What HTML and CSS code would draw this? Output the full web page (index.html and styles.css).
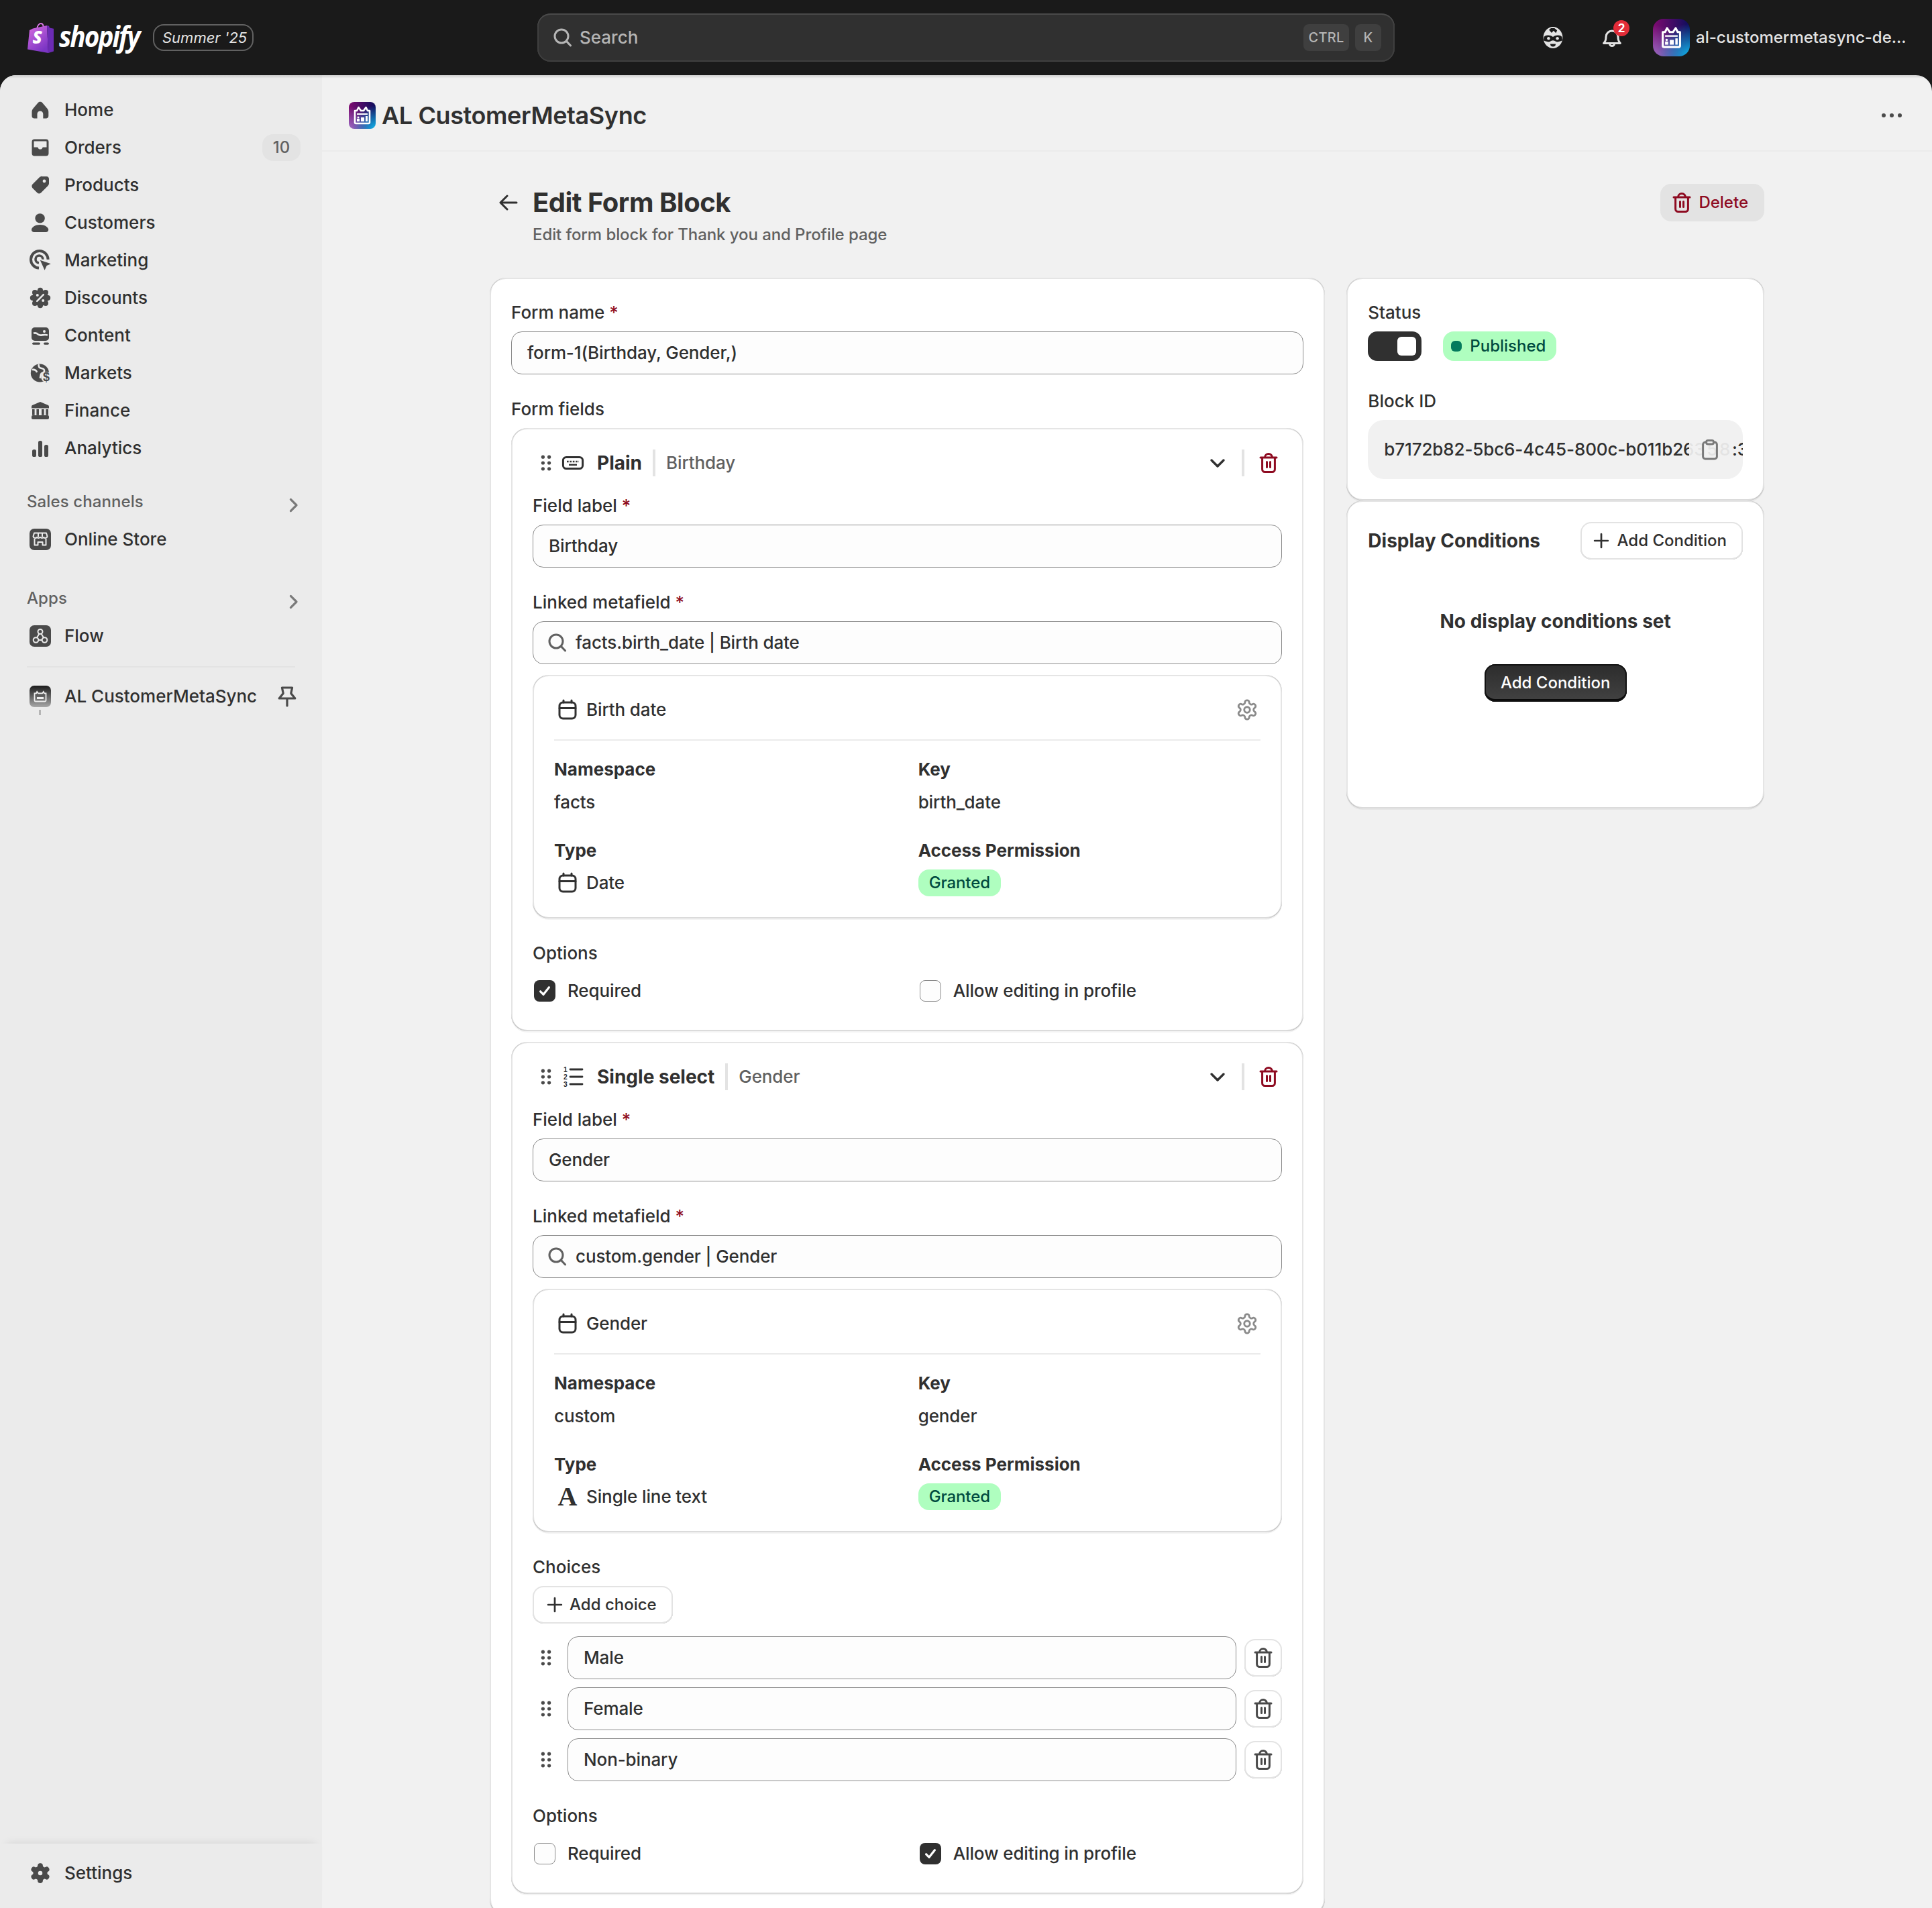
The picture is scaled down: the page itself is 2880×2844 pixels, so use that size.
FILE: index.html
```html
<!DOCTYPE html>
<html lang="en">
<head>
<meta charset="utf-8">
<title>Edit Form Block</title>
<link rel="stylesheet" href="styles.css">
</head>
<body>
<svg class="sprite" xmlns="http://www.w3.org/2000/svg">
  <defs>
    <linearGradient id="bagA" x1="0" y1="0" x2="0.6" y2="1"><stop offset="0" stop-color="#d86ce0"/><stop offset="1" stop-color="#7b35c4"/></linearGradient>
    <linearGradient id="grayApp" x1="0" y1="0" x2="0" y2="1"><stop offset="0" stop-color="#1c1c1c"/><stop offset="1" stop-color="#a8a8a8"/></linearGradient>
  </defs>
  <symbol id="i-home" viewBox="0 0 20 20"><path fill="currentColor" d="M10 3.750c-.7 0-1.300.4-1.800 1l-3.300 3.900c-.7.8-1.150 1.700-1.150 2.700v3.200c0 .9.700 1.700 1.600 1.700h2.400v-3.300a2.200 2.200 0 0 1 4.400 0v3.300h2.400c.9 0 1.600-.8 1.600-1.700v-3.200c0-1-.450-1.900-1.150-2.700l-3.300-3.900c-.5-.6-1.100-1-1.800-1z"/></symbol>
  <symbol id="i-orders" viewBox="0 0 20 20"><path fill="currentColor" fill-rule="evenodd" d="M5.750 3.750h8.500a2 2 0 0 1 2 2v8.500a2 2 0 0 1-2 2h-8.500a2 2 0 0 1-2-2v-8.500a2 2 0 0 1 2-2zM5.600 5.250c-.3 0-.35.2-.35.4v4.100h2.400c.5 0 .8.3.9.7.2.5.7.8 1.450.8s1.250-.3 1.450-.8c.1-.4.4-.7.9-.7h2.400v-4.100c0-.2-.05-.4-.35-.4z"/></symbol>
  <symbol id="i-tag" viewBox="0 0 20 20"><path fill="currentColor" fill-rule="evenodd" d="M11.500 3.500h3.200c1 0 1.800.8 1.800 1.800v3.200c0 .8-.3 1.500-.9 2.100l-5 5c-.8.8-2.100.8-2.900 0l-3.400-3.400c-.8-.8-.8-2.100 0-2.900l5-5c.6-.6 1.300-.9 2.200-.9zM13 5.800a1.200 1.200 0 1 0 0 2.400 1.200 1.200 0 0 0 0-2.400z"/></symbol>
  <symbol id="i-person" viewBox="0 0 20 20"><circle cx="9.800" cy="6.700" r="3.600" fill="currentColor"/><path fill="currentColor" d="M9.800 11.500c3.500 0 6.300 1.800 6.300 3.800 0 1-.8 1.700-1.800 1.700h-9c-1 0-1.800-.7-1.800-1.700 0-2 2.800-3.800 6.300-3.800z"/></symbol>
  <symbol id="i-target" viewBox="0 0 20 20"><g fill="none" stroke="currentColor"><path stroke-width="2" d="M9 15.800a6.400 6.400 0 1 1 6.800-6.400"/><path stroke-width="1.800" d="M9 11.900a2.700 2.700 0 1 1 2.900-2.600"/></g><path fill="currentColor" d="M9.900 9.900l8 2.700-3.100 1.400-1.500 3.400z"/></symbol>
  <symbol id="i-discount" viewBox="0 0 20 20"><g fill="currentColor"><circle cx="10" cy="10" r="6"/><circle cx="10" cy="4.400" r="2"/><circle cx="10" cy="15.600" r="2"/><circle cx="4.400" cy="10" r="2"/><circle cx="15.600" cy="10" r="2"/><circle cx="6" cy="6" r="2"/><circle cx="14" cy="6" r="2"/><circle cx="6" cy="14" r="2"/><circle cx="14" cy="14" r="2"/></g><g fill="#ebebeb"><circle cx="7.900" cy="8" r="1"/><circle cx="12.100" cy="12" r="1"/></g><path stroke="#ebebeb" stroke-width="1.300" stroke-linecap="round" d="M7.600 12.400l4.800-4.800"/></symbol>
  <symbol id="i-content" viewBox="0 0 20 20"><rect x="3.500" y="4" width="13" height="10" rx="2.400" fill="currentColor"/><path fill="none" stroke="#ebebeb" stroke-width="1.300" d="M5 8.400c1.700-.7 2.700 0 3.700 1 1.400 1.300 4-.7 6.800.4"/><circle cx="13" cy="7" r="1" fill="#ebebeb"/><rect x="4" y="15.200" width="6" height="1.700" rx=".85" fill="currentColor"/><rect x="12.500" y="15.200" width="4" height="1.700" rx=".85" fill="currentColor"/></symbol>
  <symbol id="i-finance" viewBox="0 0 20 20"><g fill="currentColor"><path d="M10 3.500l5.900 2.500c.4.200.6.500.6.900v1.300h-13v-1.300c0-.4.2-.7.6-.9z"/><rect x="4" y="9" width="1.800" height="4.400"/><rect x="7.200" y="9" width="1.800" height="4.400"/><rect x="11" y="9" width="1.800" height="4.400"/><rect x="14.200" y="9" width="1.800" height="4.400"/><rect x="3.500" y="13.500" width="13" height="3" rx="1"/></g></symbol>
  <symbol id="i-analytics" viewBox="0 0 20 20"><g fill="currentColor"><rect x="4" y="11" width="3" height="5.500" rx="1.300"/><rect x="8.500" y="4.500" width="3" height="12" rx="1.300"/><rect x="13" y="7.500" width="3" height="9" rx="1.300"/></g></symbol>
  <symbol id="i-chev-r" viewBox="0 0 20 20"><path fill="none" stroke="currentColor" stroke-width="1.600" stroke-linecap="round" stroke-linejoin="round" d="M8.200 5.700l4.300 4.300-4.300 4.300"/></symbol>
  <symbol id="i-chev-d" viewBox="0 0 20 20"><path fill="none" stroke="currentColor" stroke-width="1.700" stroke-linecap="round" stroke-linejoin="round" d="M5.500 8l4.500 4.500 4.500-4.500"/></symbol>
  <symbol id="i-store" viewBox="0 0 32 32"><rect width="32" height="32" rx="7" fill="#4a4a4a"/><g fill="none" stroke="#ebebeb" stroke-width="2" stroke-linejoin="round"><path d="M7 6.500h18l1.500 5a3 3 0 0 1-5.300 1.300 4 4 0 0 1-5.200 0 4 4 0 0 1-5.200 0 3 3 0 0 1-5.300-1.300z"/><path d="M7.500 15v9.500h5V20h7v4.500h5V15"/><path d="M13 7v5M19 7v5"/></g></symbol>
  <symbol id="i-flow" viewBox="0 0 32 32"><rect width="32" height="32" rx="7" fill="#4a4a4a"/><g fill="none" stroke="#ebebeb" stroke-width="2"><circle cx="16" cy="9.500" r="3.500"/><circle cx="9.500" cy="22" r="3.800"/><circle cx="22.500" cy="22" r="3.800"/><path d="M14.500 12.500l-3.500 6M17.500 12.500l3.500 6M13.300 22h5.400"/></g></symbol>
  <symbol id="i-appgray" viewBox="0 0 32 32"><rect width="32" height="32" rx="7" fill="url(#grayApp)"/><g fill="none" stroke="#eee" stroke-width="1.800"><path d="M7.500 11.500h2.500l1.200-2.500 1.800 2.500h6l1.800-2.500 1.200 2.500h2.500v10.500a1.500 1.500 0 0 1-1.500 1.500h-14a1.500 1.500 0 0 1-1.500-1.500z"/></g><rect x="11" y="17" width="10" height="3" fill="#eee"/></symbol>
  <symbol id="i-pin" viewBox="0 0 20 20"><path fill="none" stroke="currentColor" stroke-width="1.600" stroke-linejoin="round" stroke-linecap="round" d="M6.200 3.500h7.600l-.9 4.200 3 3.800H4.100l3-3.800zM10 11.500v5.500"/></symbol>
  <symbol id="i-gear" viewBox="0 0 24 24"><path fill="none" stroke="currentColor" stroke-width="2" d="M12.220 2h-.44a2 2 0 0 0-2 2v.18a2 2 0 0 1-1 1.730l-.43.25a2 2 0 0 1-2 0l-.15-.08a2 2 0 0 0-2.730.73l-.22.38a2 2 0 0 0 .73 2.730l.15.1a2 2 0 0 1 1 1.720v.51a2 2 0 0 1-1 1.740l-.15.09a2 2 0 0 0-.73 2.730l.22.38a2 2 0 0 0 2.730.73l.15-.08a2 2 0 0 1 2 0l.43.25a2 2 0 0 1 1 1.730V20a2 2 0 0 0 2 2h.44a2 2 0 0 0 2-2v-.18a2 2 0 0 1 1-1.730l.43-.25a2 2 0 0 1 2 0l.15.08a2 2 0 0 0 2.730-.73l.22-.39a2 2 0 0 0-.73-2.730l-.15-.08a2 2 0 0 1-1-1.740v-.5a2 2 0 0 1 1-1.740l.15-.09a2 2 0 0 0 .73-2.730l-.22-.38a2 2 0 0 0-2.730-.73l-.15.08a2 2 0 0 1-2 0l-.43-.25a2 2 0 0 1-1-1.730V4a2 2 0 0 0-2-2z"/><circle cx="12" cy="12" r="3" fill="none" stroke="currentColor" stroke-width="2"/></symbol>
  <symbol id="i-gear-solid" viewBox="0 0 24 24"><path fill="currentColor" stroke="currentColor" stroke-width="1" d="M12.220 2h-.44a2 2 0 0 0-2 2v.18a2 2 0 0 1-1 1.730l-.43.25a2 2 0 0 1-2 0l-.15-.08a2 2 0 0 0-2.730.73l-.22.38a2 2 0 0 0 .73 2.730l.15.1a2 2 0 0 1 1 1.720v.51a2 2 0 0 1-1 1.740l-.15.09a2 2 0 0 0-.73 2.730l.22.38a2 2 0 0 0 2.730.73l.15-.08a2 2 0 0 1 2 0l.43.25a2 2 0 0 1 1 1.730V20a2 2 0 0 0 2 2h.44a2 2 0 0 0 2-2v-.18a2 2 0 0 1 1-1.730l.43-.25a2 2 0 0 1 2 0l.15.08a2 2 0 0 0 2.730-.73l.22-.39a2 2 0 0 0-.73-2.730l-.15-.08a2 2 0 0 1-1-1.740v-.5a2 2 0 0 1 1-1.740l.15-.09a2 2 0 0 0 .73-2.730l-.22-.38a2 2 0 0 0-2.730-.73l-.15.08a2 2 0 0 1-2 0l-.43-.25a2 2 0 0 1-1-1.730V4a2 2 0 0 0-2-2z"/><circle cx="12" cy="12" r="2.300" fill="#ebebeb"/></symbol>
  <symbol id="i-search" viewBox="0 0 20 20"><g fill="none" stroke="currentColor" stroke-width="1.500" stroke-linecap="round"><circle cx="9" cy="9" r="5"/><path d="M12.800 12.800l3 3.200"/></g></symbol>
  <symbol id="i-clip" viewBox="0 0 20 20"><g fill="none" stroke="currentColor" stroke-width="1.500"><rect x="4.800" y="4.500" width="10.400" height="12.500" rx="1.800"/><rect x="7.300" y="3.200" width="5.400" height="2.800" rx="1.200" fill="#f1f1f1"/></g></symbol>
  <symbol id="i-trash" viewBox="0 0 20 20"><g fill="none" stroke="currentColor" stroke-width="1.500" stroke-linecap="round" stroke-linejoin="round"><path d="M4 6h12M7.250 6a2.750 2.750 0 0 1 5.500 0M5.300 6v8.800a2 2 0 0 0 2 2h5.400a2 2 0 0 0 2-2V6M8.750 9.300v4M11.250 9.300v4"/></g></symbol>
  <symbol id="i-plus" viewBox="0 0 20 20"><path fill="none" stroke="currentColor" stroke-width="1.500" stroke-linecap="round" d="M10 4.500v11M4.500 10h11"/></symbol>
  <symbol id="i-check" viewBox="0 0 20 20"><path fill="none" stroke="#fff" stroke-width="2" stroke-linecap="round" stroke-linejoin="round" d="M6 10.500l2.800 2.800 5.200-6.600"/></symbol>
  <symbol id="i-cal" viewBox="0 0 20 20"><g fill="none" stroke="currentColor" stroke-width="1.500" stroke-linecap="round"><rect x="4" y="4.500" width="12" height="12" rx="2.600"/><path d="M4 8.800h12M7 3v1.500M13 3v1.500"/></g></symbol>
  <symbol id="i-key" viewBox="0 0 20 20"><g fill="none" stroke="currentColor" stroke-width="1.500"><rect x="2.700" y="5.700" width="14.600" height="8.600" rx="2.400"/></g><path stroke="currentColor" stroke-width="1.200" stroke-dasharray="1.300 .9" d="M5.500 9h9"/><path stroke="currentColor" stroke-width="1.200" d="M7 11.400h6"/></symbol>
  <symbol id="i-drag" viewBox="0 0 20 20"><g fill="currentColor"><circle cx="7.700" cy="5.600" r="1.300"/><circle cx="12.300" cy="5.600" r="1.300"/><circle cx="7.700" cy="10" r="1.300"/><circle cx="12.300" cy="10" r="1.300"/><circle cx="7.700" cy="14.400" r="1.300"/><circle cx="12.300" cy="14.400" r="1.300"/></g></symbol>
  <symbol id="i-back" viewBox="0 0 20 20"><path fill="none" stroke="currentColor" stroke-width="1.500" stroke-linecap="round" stroke-linejoin="round" d="M16 10H4.200M9 5l-5 5 5 5"/></symbol>
  <symbol id="i-dots" viewBox="0 0 20 20"><g fill="currentColor"><circle cx="4" cy="10" r="1.500"/><circle cx="10" cy="10" r="1.500"/><circle cx="16" cy="10" r="1.500"/></g></symbol>
  <symbol id="i-bell" viewBox="0 0 20 20"><path fill="none" stroke="currentColor" stroke-width="1.500" stroke-linejoin="round" stroke-linecap="round" d="M3.800 14.200c1.300-1.100 1.700-2.300 1.700-4.700a4.500 4.500 0 0 1 9 0c0 2.400.4 3.600 1.700 4.700zM8.300 14.600a1.700 1.700 0 0 0 3.400 0"/></symbol>
  <symbol id="i-mask" viewBox="0 0 20 20"><ellipse cx="10" cy="10" rx="7.200" ry="8" fill="currentColor"/><path fill="#1a1a1a" d="M3.300 9.500c1.500-1.500 4-1.700 6.700 0 2.700-1.700 5.200-1.500 6.700 0l.3 2.600c-2 .9-3.800 1.400-4.800.9-.9-.5-1.300-.9-2.200-.9s-1.300.4-2.200.9c-1 .5-2.800 0-4.800-.9zM7 4.300l2 2.200 1.400-1.600 1.800 1.700.9-2-2-1.600H8.500z"/><circle cx="6.700" cy="10.600" r="1.100" fill="currentColor"/><circle cx="13.300" cy="10.600" r="1.100" fill="currentColor"/><path fill="#1a1a1a" d="M8 14.700h4a2 2 0 0 1-4 0z"/></symbol>
  <symbol id="i-app" viewBox="0 0 40 40"><g fill="none" stroke="#fff" stroke-width="2.600" stroke-linejoin="round"><path d="M9 13h3l2.500-5 3.500 5h4l3.500-5 2.500 5h3v17.500a1.500 1.500 0 0 1-1.500 1.500h-19A1.500 1.500 0 0 1 9 30.500z"/><path stroke-width="2" d="M12 18h16"/></g><g fill="#fff"><circle cx="14" cy="23" r="1.500"/><rect x="12" y="25" width="4" height="4"/><rect x="18" y="23" width="5" height="6"/><rect x="25" y="21" width="3" height="8"/></g></symbol>
</svg>

<header class="topbar">
  <div class="brand">
    <svg class="bag" viewBox="0 0 40 46"><path fill="none" stroke="#d978e6" stroke-width="2" d="M14 11c.6-5 3-9 6-9 2.800 0 4 3.600 4 8"/><path fill="url(#bagA)" d="M8 9.500L29 5l2 41L0 40.500 3 12z"/><path fill="#6b2bb3" d="M29 5l3 .8 1 2.600 6 1.400L39 43.500 31 46z"/><text x="14.500" y="32" text-anchor="middle" class="svg-s">S</text></svg>
    <span class="wordmark">shopify</span>
    <span class="edition">Summer '25</span>
  </div>
  <div class="searchbar">
    <svg class="search-ic"><use href="#i-search"/></svg>
    <span class="search-text">Search</span>
    <span class="kbd">CTRL</span>
    <span class="kbd">K</span>
  </div>
  <div class="top-actions">
    <svg class="ic top-ic"><use href="#i-mask"/></svg>
    <span class="bell-wrap">
      <svg class="ic top-ic"><use href="#i-bell"/></svg>
      <span class="bell-badge">2</span>
    </span>
    <span class="store-ava"><svg class="ic-app"><use href="#i-app"/></svg></span>
    <span class="store-name">al-customermetasync-de...</span>
  </div>
</header>

<div class="frame">
  <aside class="sidebar">
    <nav class="nav">
      <a class="nav-row"><svg class="ic"><use href="#i-home"/></svg><span>Home</span></a>
      <a class="nav-row"><svg class="ic"><use href="#i-orders"/></svg><span>Orders</span><span class="count">10</span></a>
      <a class="nav-row"><svg class="ic"><use href="#i-tag"/></svg><span>Products</span></a>
      <a class="nav-row"><svg class="ic"><use href="#i-person"/></svg><span>Customers</span></a>
      <a class="nav-row"><svg class="ic"><use href="#i-target"/></svg><span>Marketing</span></a>
      <a class="nav-row"><svg class="ic"><use href="#i-discount"/></svg><span>Discounts</span></a>
      <a class="nav-row"><svg class="ic"><use href="#i-content"/></svg><span>Content</span></a>
      <a class="nav-row"><svg class="ic" viewBox="0 0 20 20"><circle cx="9.700" cy="10" r="6.800" fill="#4a4a4a"/><path fill="none" stroke="#ebebeb" stroke-width="1.300" d="M9 3.500c-.7 1.700.4 2.800 2 3 1.400.2 2.300 1 2 2.200-.2 1-1.400 1-2.200 1.700-.8.800-.2 2.600-1.200 3.300M4 7.500c1.600-.2 3 .5 3.600 2"/><circle cx="14.500" cy="13" r="3.900" fill="#ebebeb"/><text x="14.500" y="16.100" text-anchor="middle" class="svg-dollar">$</text></svg><span>Markets</span></a>
      <a class="nav-row"><svg class="ic"><use href="#i-finance"/></svg><span>Finance</span></a>
      <a class="nav-row"><svg class="ic"><use href="#i-analytics"/></svg><span>Analytics</span></a>
      <div class="nav-head nav-head-sales"><span>Sales channels</span><svg class="ic nav-chev"><use href="#i-chev-r"/></svg></div>
      <a class="nav-row"><svg class="ic-sq"><use href="#i-store"/></svg><span>Online Store</span></a>
      <div class="nav-head nav-head-apps"><span>Apps</span><svg class="ic nav-chev"><use href="#i-chev-r"/></svg></div>
      <a class="nav-row"><svg class="ic-sq"><use href="#i-flow"/></svg><span>Flow</span></a>
      <hr class="nav-rule">
      <a class="nav-row nav-app"><svg class="ic-sq"><use href="#i-appgray"/></svg><span>AL CustomerMetaSync</span><svg class="ic nav-pin"><use href="#i-pin"/></svg><i class="app-tick"></i></a>
    </nav>
    <div class="nav-foot">
      <a class="nav-row"><svg class="ic ic-settings"><use href="#i-gear-solid"/></svg><span>Settings</span></a>
    </div>
  </aside>

  <main class="main">
    <div class="titlebar">
      <span class="app-ava"><svg class="ic-app"><use href="#i-app"/></svg></span>
      <span class="app-title">AL CustomerMetaSync</span>
      <svg class="ic title-dots"><use href="#i-dots"/></svg>
    </div>

    <div class="page">
      <div class="page-head">
        <svg class="ic back"><use href="#i-back"/></svg>
        <div class="page-titles">
          <h1>Edit Form Block</h1>
          <p>Edit form block for Thank you and Profile page</p>
        </div>
        <button class="btn-delete"><svg class="ic"><use href="#i-trash"/></svg>Delete</button>
      </div>

      <div class="columns">
        <section class="card main-card">
          <label class="lbl">Form name <em>*</em></label>
          <div class="input">form-1(Birthday, Gender,)</div>
          <label class="lbl lbl-gap">Form fields</label>

          <div class="field-card">
            <div class="field-head">
              <svg class="ic"><use href="#i-drag"/></svg>
              <svg class="ic dark"><use href="#i-key"/></svg>
              <strong>Plain</strong>
              <i class="vr"></i>
              <span class="muted">Birthday</span>
              <svg class="ic chev"><use href="#i-chev-d"/></svg>
              <i class="vr"></i>
              <svg class="ic red"><use href="#i-trash"/></svg>
            </div>
            <label class="lbl lbl-first">Field label <em>*</em></label>
            <div class="input">Birthday</div>
            <label class="lbl lbl-gap">Linked metafield <em>*</em></label>
            <div class="input input-search"><svg class="ic gray"><use href="#i-search"/></svg>facts.birth_date | Birth date</div>
            <div class="meta-card">
              <div class="meta-head">
                <svg class="ic dark"><use href="#i-cal"/></svg>
                <span>Birth date</span>
                <svg class="gear"><use href="#i-gear"/></svg>
              </div>
              <div class="meta-grid">
                <div><b>Namespace</b><span class="val">facts</span></div>
                <div><b>Key</b><span class="val">birth_date</span></div>
                <div><b>Type</b><span class="val val-type"><svg class="ic dark"><use href="#i-cal"/></svg>Date</span></div>
                <div><b>Access Permission</b><span class="val val-type"><span class="badge">Granted</span></span></div>
              </div>
            </div>
            <label class="lbl lbl-gap">Options</label>
            <div class="opts">
              <div class="opt"><span class="cb cb-on"><svg><use href="#i-check"/></svg></span>Required</div>
              <div class="opt"><span class="cb"></span>Allow editing in profile</div>
            </div>
          </div>

          <div class="field-card field-next">
            <div class="field-head">
              <svg class="ic"><use href="#i-drag"/></svg>
              <svg class="ic" viewBox="0 0 20 20"><path fill="none" stroke="#303030" stroke-width="1.400" stroke-linecap="round" d="M8 4.500h9M8 10h9M8 15.500h9"/><g class="svg-num"><text x="3" y="6.500">1</text><text x="3" y="12">2</text><text x="3" y="17.600">3</text></g></svg>
              <strong>Single select</strong>
              <i class="vr"></i>
              <span class="muted">Gender</span>
              <svg class="ic chev"><use href="#i-chev-d"/></svg>
              <i class="vr"></i>
              <svg class="ic red"><use href="#i-trash"/></svg>
            </div>
            <label class="lbl lbl-first">Field label <em>*</em></label>
            <div class="input">Gender</div>
            <label class="lbl lbl-gap">Linked metafield <em>*</em></label>
            <div class="input input-search"><svg class="ic gray"><use href="#i-search"/></svg>custom.gender | Gender</div>
            <div class="meta-card">
              <div class="meta-head">
                <svg class="ic dark"><use href="#i-cal"/></svg>
                <span>Gender</span>
                <svg class="gear"><use href="#i-gear"/></svg>
              </div>
              <div class="meta-grid">
                <div><b>Namespace</b><span class="val">custom</span></div>
                <div><b>Key</b><span class="val">gender</span></div>
                <div><b>Type</b><span class="val val-type"><span class="glyph-a">A</span>Single line text</span></div>
                <div><b>Access Permission</b><span class="val val-type"><span class="badge">Granted</span></span></div>
              </div>
            </div>
            <label class="lbl lbl-gap">Choices</label>
            <button class="btn btn-add"><svg class="ic"><use href="#i-plus"/></svg>Add choice</button>
            <div class="choices">
              <div class="choice"><svg class="ic"><use href="#i-drag"/></svg><div class="input">Male</div><button class="btn-icon"><svg class="ic"><use href="#i-trash"/></svg></button></div>
              <div class="choice"><svg class="ic"><use href="#i-drag"/></svg><div class="input">Female</div><button class="btn-icon"><svg class="ic"><use href="#i-trash"/></svg></button></div>
              <div class="choice"><svg class="ic"><use href="#i-drag"/></svg><div class="input">Non-binary</div><button class="btn-icon"><svg class="ic"><use href="#i-trash"/></svg></button></div>
            </div>
            <label class="lbl lbl-gap">Options</label>
            <div class="opts">
              <div class="opt"><span class="cb"></span>Required</div>
              <div class="opt"><span class="cb cb-on"><svg><use href="#i-check"/></svg></span>Allow editing in profile</div>
            </div>
          </div>
        </section>

        <div class="side-col">
          <section class="card side-card">
            <label class="lbl">Status</label>
            <div class="status-row">
              <span class="toggle"><i></i></span>
              <span class="badge badge-status"><i class="dot"></i>Published</span>
            </div>
            <label class="lbl lbl-block">Block ID</label>
            <div class="idbox">
              <span class="idtext">b7172b82-5bc6-4c45-800c-b011b26<span class="idtail">358</span>:3</span>
              <span class="idcover"><svg class="ic clip"><use href="#i-clip"/></svg></span>
            </div>
          </section>
          <section class="card side-card cond-card">
            <div class="cond-head">
              <strong>Display Conditions</strong>
              <button class="btn btn-cond"><svg class="ic"><use href="#i-plus"/></svg>Add Condition</button>
            </div>
            <div class="cond-empty">
              <strong>No display conditions set</strong>
              <button class="btn-primary">Add Condition</button>
            </div>
          </section>
        </div>
      </div>
    </div>
  </main>
</div>
</body>
</html>
```

FILE: styles.css
```css
* { box-sizing: border-box; }
html, body { margin: 0; height: 2844px; overflow: hidden; }
body {
  background: #1a1a1a;
  color: #303030;
  font-family: Inter, "Noto Sans", "Liberation Sans", sans-serif;
  font-size: 26px;
  line-height: 40px;
  font-weight: 450;
  -webkit-font-smoothing: antialiased;
}
.sprite { position: absolute; width: 0; height: 0; overflow: hidden; }
.svg-dollar { font: 700 9px "Liberation Sans", sans-serif; fill: #4a4a4a; }
.svg-num { font: 700 5.200px "Liberation Sans", sans-serif; fill: #303030; }
.svg-s { font: italic 800 26px "Open Sans", sans-serif; fill: #fff; }
.ic { width: 40px; height: 40px; flex: none; display: block; color: #4a4a4a; }
.ic.dark { color: #303030; }
.ic-sq { width: 32px; height: 32px; flex: none; display: block; margin: 0 4px; overflow: visible; }
.ic-app { width: 100%; height: 100%; display: block; }

/* Top bar */
.topbar { height: 112px; display: flex; align-items: center; position: relative; }
.brand { width: 801px; padding-left: 41px; display: flex; align-items: center; flex: none; }
.bag { width: 40px; height: 46px; flex: none; }
.wordmark {
  margin-left: 7px;
  font: italic 700 43px/46px "Open Sans", sans-serif;
  letter-spacing: -2.200px;
  color: #fff;
  width: 125px;
  transform: translateY(-2px) scaleX(.9);
  transform-origin: left center;
}
.edition {
  margin-left: 15px;
  height: 40px;
  padding: 0 8px 0 12px;
  border: 2px solid #616161;
  border-radius: 16px;
  font-style: italic;
  font-size: 22px;
  line-height: 36px;
  color: #e3e3e3;
}
.searchbar {
  width: 1278px;
  height: 72px;
  flex: none;
  display: flex;
  align-items: center;
  padding: 0 20px 0 18px;
  background: #303030;
  border-radius: 20px;
  box-shadow: inset 0 2px 0 #4a4a4a, inset 2px 0 0 #3f3f3f, inset -2px 0 0 #3f3f3f, inset 0 -2px 0 #3f3f3f;
  color: #b5b5b5;
}
.search-ic { width: 40px; height: 40px; flex: none; color: #b5b5b5; }
.search-text { margin-left: 5px; flex: 1; }
.kbd {
  height: 40px;
  width: 68px;
  margin-left: 9px;
  border-radius: 8px;
  background: #3f3f3f;
  color: #b5b5b5;
  font-size: 20px;
  line-height: 40px;
  letter-spacing: .2px;
  text-align: center;
}
.kbd:last-child { width: 39px; }
.top-actions { flex: 1; display: flex; align-items: center; padding-left: 216px; }
.top-ic { color: #e3e3e3; }
.bell-wrap { margin-left: 48px; position: relative; display: block; }
.bell-badge {
  position: absolute;
  left: 22px;
  top: -6px;
  width: 24px;
  height: 24px;
  border-radius: 12px;
  background: #e22c38;
  color: #fff;
  font-size: 17px;
  line-height: 24px;
  font-weight: 700;
  text-align: center;
}
.store-ava {
  margin-left: 41px;
  width: 55px;
  height: 56px;
  border-radius: 16px;
  flex: none;
  padding: 4px;
  background:
    radial-gradient(circle at 100% 100%, #12b9ee 0, rgba(18,185,238,0) 62%),
    radial-gradient(circle at 0 100%, #9a6cc4 0, rgba(154,108,196,0) 60%),
    linear-gradient(90deg, #7f0a70, #0c0d5c);
}
.store-name { margin-left: 9px; color: #e3e3e3; white-space: nowrap; font-size: 24px; }

/* Frame */
.frame {
  height: 2732px;
  display: flex;
  border-radius: 24px 24px 0 0;
  overflow: hidden;
  background: #f1f1f1;
  position: relative;
}
.frame::after {
  content: "";
  position: absolute;
  inset: 0 0 auto 0;
  height: 5px;
  background: linear-gradient(rgba(0,0,0,.14), rgba(0,0,0,0));
  pointer-events: none;
}
.sidebar { width: 480px; flex: none; background: #ebebeb; display: flex; flex-direction: column; padding-top: 24px; }
.nav { flex: 1; padding: 0 40px; display: flex; flex-direction: column; }
.nav-row { height: 56px; display: flex; align-items: center; gap: 16px; flex: none; position: relative; }
.count {
  margin-left: auto;
  margin-right: -8px;
  width: 57px;
  height: 40px;
  border-radius: 16px;
  background: #e3e3e3;
  color: #616161;
  text-align: center;
  font-size: 24px;
}
.nav-head { height: 56px; display: flex; align-items: center; justify-content: space-between; flex: none; color: #616161; font-size: 24px; font-weight: 550; letter-spacing: .1px; }
.nav-head-sales { margin-top: 24px; }
.nav-head-apps { margin-top: 32px; }
.nav-chev { color: #7a7a7a; margin: 10px -17px 0 0; }
.nav-rule { border: 0; height: 2px; background: #e3e3e3; margin: 17px 0 15px; width: 400px; flex: none; }
.nav-pin { margin-left: auto; margin-right: -8px; }
.app-tick { position: absolute; left: 18px; top: 48px; width: 3px; height: 8px; background: #b5b5b5; }
.nav-foot { flex: none; padding: 16px 40px 24px; box-shadow: 0 -10px 12px -10px rgba(0,0,0,.1); }
.ic-settings { transform: scale(.85); }

/* Main */
.main { flex: 1; min-width: 0; }
.titlebar {
  height: 114px;
  padding: 8px 40px 0;
  border-bottom: 2px solid #ebebeb;
  display: flex;
  align-items: center;
}
.app-ava {
  width: 40px;
  height: 40px;
  border-radius: 8px;
  flex: none;
  background:
    radial-gradient(circle at 100% 100%, #12b9ee 0, rgba(18,185,238,0) 62%),
    radial-gradient(circle at 0 100%, #9a6cc4 0, rgba(154,108,196,0) 60%),
    linear-gradient(90deg, #7f0a70, #0c0d5c);
}
.app-title { margin-left: 9px; font-size: 36px; line-height: 48px; font-weight: 600; flex: 1; letter-spacing: -.4px; }
.page { width: 1900px; margin: 0 auto; padding-top: 48px; }
.page-head { display: flex; align-items: flex-start; height: 140px; }
.back { margin: 8px 16px 0 8px; color: #303030; }
.page-titles { flex: 1; }
.page-titles h1 { margin: 0; font-size: 40px; line-height: 56px; font-weight: 650; letter-spacing: -.5px; }
.page-titles p { margin: 0; color: #616161; line-height: 40px; font-size: 24px; letter-spacing: -.08px; }
.btn-delete {
  height: 56px;
  padding: 0 24px 0 12px;
  border: 0;
  border-radius: 16px;
  background: #e3e3e3;
  color: #8e0b21;
  font: 550 24px/40px Inter, sans-serif;
  display: flex;
  align-items: center;
  gap: 5px;
}
.btn-delete .ic { color: #8e0b21; }
.columns { display: grid; grid-template-columns: minmax(0, 2fr) minmax(0, 1fr); gap: 32px; align-items: start; }

/* Cards */
.card {
  background: #fff;
  border-radius: 24px;
  padding: 32px;
  box-shadow:
    inset 2px 0 0 rgba(0,0,0,.1),
    inset -2px 0 0 rgba(0,0,0,.1),
    inset 0 -2px 0 rgba(0,0,0,.14),
    inset 0 2px 0 rgba(204,204,204,.5),
    0 2px 0 rgba(26,26,26,.05);
}
.lbl { display: block; }
.lbl em { color: #8e0b21; font-style: normal; margin-left: 0; }
.lbl-gap { margin-top: 32px; }
.lbl-first { margin-top: 24px; }
.lbl + .input, .lbl + .input-search { margin-top: 8px; }
.input {
  height: 64px;
  background: #fdfdfd;
  border: 1px solid #8a8a8a;
  border-radius: 16px;
  padding: 0 23px;
  display: flex;
  align-items: center;
  letter-spacing: -.12px;
}
.input-search { padding-left: 16px; gap: 7px; }
.gray { color: #616161; }
.field-card {
  margin-top: 8px;
  padding: 32px 32px 40px;
  border-radius: 24px;
  background: #fff;
  box-shadow:
    inset 2px 0 0 rgba(0,0,0,.1),
    inset -2px 0 0 rgba(0,0,0,.1),
    inset 0 -2px 0 rgba(0,0,0,.14),
    inset 0 2px 0 rgba(204,204,204,.5),
    0 2px 0 rgba(26,26,26,.05);
}
.field-next { margin-top: 16px; }
.field-head { height: 40px; display: flex; align-items: center; }
.field-head strong { font-weight: 650; font-size: 28px; margin: 0 16px; }
.vr { width: 4px; height: 40px; background: #e3e3e3; flex: none; }
.muted { color: #616161; margin-left: 16px; letter-spacing: -.12px; }
.chev { margin-left: auto; margin-right: 16px; color: #303030; }
.red { color: #8e0b21; margin-left: 16px; }
.meta-card {
  margin-top: 16px;
  padding: 32px 32px 33px;
  border-radius: 24px;
  background: #fff;
  box-shadow:
    inset 2px 0 0 rgba(0,0,0,.1),
    inset -2px 0 0 rgba(0,0,0,.1),
    inset 0 -2px 0 rgba(0,0,0,.14),
    inset 0 2px 0 rgba(204,204,204,.5),
    0 2px 0 rgba(26,26,26,.05);
}
.meta-head { height: 66px; margin-bottom: 23px; padding-bottom: 24px; border-bottom: 2px solid #ebebeb; display: flex; align-items: center; gap: 8px; }
.meta-head span { flex: 1; letter-spacing: -.12px; }
.gear { width: 34px; height: 34px; color: #8a8a8a; margin-right: 3px; flex: none; }
.meta-grid { display: grid; grid-template-columns: 1fr 1fr; column-gap: 32px; row-gap: 32px; }
.meta-grid b { display: block; font-weight: 650; }
.val { display: block; margin-top: 9px; letter-spacing: -.12px; }
.val-type { display: flex; align-items: center; gap: 8px; margin-top: 8px; height: 40px; }
.glyph-a { width: 40px; flex: none; text-align: center; font: 700 40px/40px "Liberation Serif", serif; color: #303030; }
.badge {
  display: inline-flex;
  align-items: center;
  height: 40px;
  padding: 0 16px;
  border-radius: 16px;
  background: #affebf;
  color: #014b40;
  font-size: 24px;
}
.opts { margin-top: 16px; display: grid; grid-template-columns: 1fr 1fr; column-gap: 32px; }
.opt { display: flex; align-items: center; gap: 18px; padding-left: 2px; letter-spacing: -.12px; }
.cb { width: 32px; height: 32px; border-radius: 8px; background: #fdfdfd; border: 1px solid #8a8a8a; flex: none; }
.cb svg { display: block; width: 100%; height: 100%; }
.cb-on { background: #303030; border: 0; }
.btn {
  height: 56px;
  padding: 0 24px 0 15px;
  border: 0;
  border-radius: 16px;
  background: #fff;
  color: #303030;
  font: 550 24px/40px Inter, sans-serif;
  display: flex;
  align-items: center;
  gap: 4px;
  box-shadow: inset 0 0 0 2px #e3e3e3, inset 0 -2px 0 #b5b5b5;
}
.btn .ic { color: #303030; width: 36px; height: 36px; }
.btn-add { margin-top: 8px; }
.btn-cond { padding-left: 13px; gap: 6px; }
.choices { margin-top: 19px; display: flex; flex-direction: column; gap: 12px; }
.choice { display: flex; align-items: center; gap: 12px; }
.choice .input { flex: 1; }
.btn-icon {
  width: 56px;
  height: 56px;
  padding: 8px;
  border: 0;
  border-radius: 16px;
  background: #fff;
  box-shadow: inset 0 0 0 2px #e3e3e3, inset 0 -2px 0 #b5b5b5;
  flex: none;
}
.side-card .lbl-block { margin-top: 40px; }
.status-row { margin-top: 8px; display: flex; align-items: center; gap: 32px; }
.toggle { width: 80px; height: 44px; border-radius: 14px; background: #303030; display: flex; align-items: center; justify-content: flex-end; padding-right: 8px; flex: none; }
.toggle i { width: 28px; height: 28px; border-radius: 6px; background: #fff; }
.badge-status { height: 44px; padding: 0 16px 0 12px; gap: 12px; }
.dot { width: 16px; height: 16px; border-radius: 6px; background: #047b5d; }
.idbox { margin-top: 8px; height: 88px; border-radius: 24px; background: #f1f1f1; padding-left: 24px; display: flex; align-items: center; overflow: hidden; position: relative; white-space: nowrap; letter-spacing: -.12px; }
.idtail { letter-spacing: 2.600px; }
.idcover { position: absolute; left: 479px; top: 0; bottom: 0; width: 62px; background: rgba(241,241,241,.93); display: flex; align-items: center; justify-content: center; }
.clip { color: #7a7a7a; }
.cond-card { height: 459px; }
.cond-head { display: flex; align-items: center; justify-content: space-between; }
.cond-head strong { font-size: 28px; font-weight: 650; }
.cond-empty { display: flex; flex-direction: column; align-items: center; margin-top: 72px; gap: 44px; }
.cond-empty strong { font-size: 28px; font-weight: 650; }
.btn-primary {
  height: 56px;
  width: 212px;
  border: 0;
  border-radius: 16px;
  background: linear-gradient(#2c2c2c, #424242);
  color: #fff;
  font: 550 24px/40px Inter, sans-serif;
  box-shadow: inset 0 0 0 2px #111, inset 0 -4px 0 #0a0a0a, inset 0 4px 0 -2px #5a5a5a;
}
```
